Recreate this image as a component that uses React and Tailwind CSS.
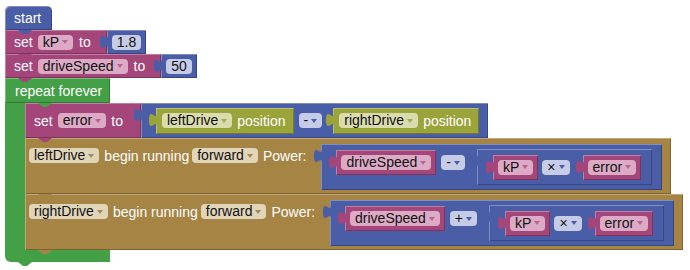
import React from 'react';

const BLUE = '#4a5ea8';
const PINK = '#a5467a';
const GREEN = '#44a047';
const OLIVE = '#9ba33b';
const BROWN = '#a68444';

const edge = 'shadow-[inset_1px_1px_0_rgba(255,255,255,0.3),inset_-1px_-1px_0_rgba(0,0,0,0.25)]';

const pillStyles = {
  pink: { box: 'bg-[#dcaac5]', arrow: '#b76591' },
  blue: { box: 'bg-[#c6cbe8]', arrow: '#4a5ea8' },
  tan: { box: 'bg-[#e1d5b9]', arrow: '#a68a5a' },
  olive: { box: 'bg-[#dadcae]', arrow: '#a4aa55' },
};

function Arrow({ fill }) {
  return (
    <svg width="6" height="4" viewBox="0 0 6 4" className="ml-[3px] shrink-0">
      <path d="M0 0H6L3 4Z" fill={fill} />
    </svg>
  );
}

function Pill({ text, kind, arrow = true, className = '' }) {
  const s = pillStyles[kind];
  return (
    <div className={`flex h-[15px] shrink-0 items-center rounded-[4px] px-[5px] text-[#111] ${s.box} ${className}`}>
      <span className="leading-[15px]">{text}</span>
      {arrow && <Arrow fill={s.arrow} />}
    </div>
  );
}

// output tab on the left side of a value block
function Tab({ fill }) {
  return (
    <svg width="8" height="14" viewBox="0 0 8 14" className="absolute left-[-7px] top-[5px]">
      <path d="M8 0C8 9 0 -7 0 7S8 5 8 14Z" fill={fill} />
    </svg>
  );
}

// next-statement notch under a statement block
function Notch({ fill }) {
  return (
    <svg width="14" height="4" viewBox="0 0 14 4" className="absolute bottom-[-4px] left-[13px] z-10">
      <path d="M0 0L5 4H9L14 0Z" fill={fill} />
    </svg>
  );
}

function NumberBlock({ value, className = '' }) {
  return (
    <div className={`relative flex h-[24px] shrink-0 items-center bg-[#4a5ea8] px-[5px] ${edge} ${className}`}>
      <Tab fill={BLUE} />
      <Pill text={value} kind="blue" arrow={false} />
    </div>
  );
}

function VarBlock({ name, className = '' }) {
  return (
    <div className={`relative flex h-[25px] shrink-0 items-center bg-[#a5467a] px-[5px] ${edge} ${className}`}>
      <Tab fill={PINK} />
      <Pill text={name} kind="pink" />
    </div>
  );
}

function PosBlock({ name, className = '' }) {
  return (
    <div className={`relative flex h-[26px] shrink-0 items-center bg-[#9ba33b] pl-[6px] pr-[8px] ${edge} ${className}`}>
      <Tab fill={OLIVE} />
      <Pill text={name} kind="olive" />
      <span className="ml-[5px] text-white">position</span>
    </div>
  );
}

function SetBlock({ name, value }) {
  return (
    <div className="relative flex">
      <div className={`flex h-[24px] items-center bg-[#a5467a] pl-[9px] pr-[16px] text-white ${edge}`}>
        <span>set</span>
        <Pill text={name} kind="pink" className="ml-[5px]" />
        <span className="ml-[6px]">to</span>
      </div>
      <NumberBlock value={value} />
      <Notch fill={PINK} />
    </div>
  );
}

// kP × error
function TimesBlock({ className = '' }) {
  return (
    <div className={`relative flex h-[36px] shrink-0 items-center bg-[#4a5ea8] pl-[16px] pr-[11px] ${edge} ${className}`}>
      <Tab fill={BLUE} />
      <VarBlock name="kP" />
      <Pill text="×" kind="blue" className="ml-[4px]" />
      <VarBlock name="error" className="ml-[13px]" />
    </div>
  );
}

// driveSpeed op (kP × error)
function PowerBlock({ op }) {
  return (
    <div className={`relative ml-[15px] flex shrink-0 items-start bg-[#4a5ea8] py-[5px] pl-[15px] pr-[10px] ${edge}`}>
      <Tab fill={BLUE} />
      <VarBlock name="driveSpeed" className="mt-[1px]" />
      <Pill text={op} kind="blue" className="ml-[5px] mt-[6px]" />
      <TimesBlock className="ml-[12px]" />
    </div>
  );
}

function MotorBlock({ motor }) {
  return (
    <div className={`relative flex items-start bg-[#a68444] pb-[4px] pl-[4px] pr-[9px] pt-[6px] text-white ${edge}`}>
      <div className="mt-[4px] flex h-[15px] items-center">
        <Pill text={motor} kind="tan" />
        <span className="ml-[5px]">begin running</span>
        <Pill text="forward" kind="tan" className="ml-[3px]" />
        <span className="ml-[5px]">Power:</span>
      </div>
      <PowerBlock op={motor === 'leftDrive' ? '-' : '+'} />
      <Notch fill={BROWN} />
    </div>
  );
}

function SetErrorBlock() {
  return (
    <div className="relative flex">
      <div className={`flex h-[35px] items-center bg-[#a5467a] pl-[9px] pr-[18px] text-white ${edge}`}>
        <span>set</span>
        <Pill text="error" kind="pink" className="ml-[5px]" />
        <span className="ml-[5px]">to</span>
      </div>
      <div className={`relative flex h-[35px] items-center bg-[#4a5ea8] pl-[15px] pr-[9px] ${edge}`}>
        <Tab fill={BLUE} />
        <PosBlock name="leftDrive" />
        <Pill text="-" kind="blue" className="ml-[5px]" />
        <PosBlock name="rightDrive" className="ml-[11px]" />
      </div>
      <Notch fill={PINK} />
    </div>
  );
}

export default function App() {
  return (
    <div className="relative h-[270px] w-[690px] overflow-hidden bg-white font-['Liberation_Sans',Arial,sans-serif] text-[14px] leading-[16px]">
      <div className="flex flex-col items-start pl-[5px] pt-[6px]">
        <div className={`relative flex h-[24px] w-[47px] items-center rounded-t-[5px] bg-[#4a5ea8] pl-[9px] text-white ${edge}`}>
          start
          <Notch fill={BLUE} />
        </div>
        <SetBlock name="kP" value="1.8" />
        <SetBlock name="driveSpeed" value="50" />

        <div className="flex flex-col items-start">
          <div className={`relative flex h-[25px] w-[105px] items-center bg-[#44a047] pl-[10px] text-white ${edge}`}>
            repeat forever
          </div>
          <div className="flex">
            <div className="w-[20px] bg-[#44a047]" />
            <div className="relative flex flex-col items-start">
              <svg width="14" height="4" viewBox="0 0 14 4" className="absolute left-[13px] top-0 z-10">
                <path d="M0 0L5 4H9L14 0Z" fill={GREEN} />
              </svg>
              <SetErrorBlock />
              <MotorBlock motor="leftDrive" />
              <MotorBlock motor="rightDrive" />
            </div>
          </div>
          <div className="relative h-[12px] w-[105px] rounded-bl-[6px] bg-[#44a047]">
            <Notch fill={GREEN} />
          </div>
        </div>
      </div>
    </div>
  );
}
